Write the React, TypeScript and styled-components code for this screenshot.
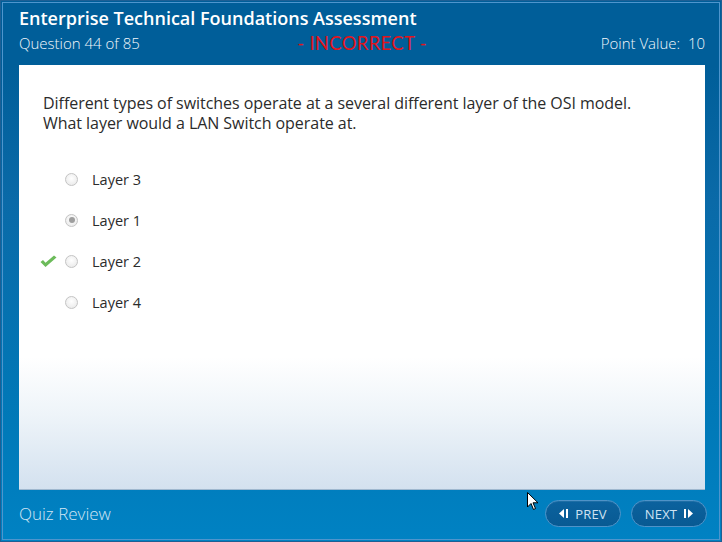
import React from "react";
import styled, { createGlobalStyle } from "styled-components";

const Global = createGlobalStyle`
  html, body { margin: 0; padding: 0; background: #0070b0; }
  body { width: 722px; height: 542px; overflow: hidden; }
  * { box-sizing: border-box; }
`;

const Frame = styled.div`
  position: relative;
  width: 722px;
  height: 542px;
  background: linear-gradient(#005e99 0px, #005e99 65px, #0a6aa8 200px, #0079b8 420px, #0082c3 542px);
  border: 1px solid #1d5f94;
  display: flex;
  flex-direction: column;
  &::after {
    content: "";
    position: absolute;
    inset: 1px;
    border: 1px solid #4e95cd;
    pointer-events: none;
  }
`;

const Header = styled.header`
  height: 64px;
  padding: 5px 16px 0 18px;
  display: flex;
  flex-direction: column;
  font-family: "Open Sans", "Lato", sans-serif;
  color: #fff;
`;

const Title = styled.h1`
  margin: 0;
  font-size: 18px;
  font-weight: 600;
  line-height: 24px;
  letter-spacing: 0px;
`;

const SubRow = styled.div`
  display: grid;
  grid-template-columns: 1fr auto 1fr;
  align-items: center;
  margin-top: 2px;
  font-size: 15px;
  font-weight: 300;
  line-height: 20px;
  color: #f2f7fb;
`;

const Status = styled.span`
  color: #e3141c;
  font-family: "Lato", "Open Sans", sans-serif;
  font-weight: 400;
  font-size: 18.5px;
  line-height: 20px;
  letter-spacing: 0.3px;
  margin-top: 1px;
`;

const Right = styled.span`
  justify-self: end;
`;

const Panel = styled.main`
  margin: 0 16px 0 18px;
  height: 425px;
  background: linear-gradient(#ffffff 0px, #ffffff 292px, #eef4f9 350px, #d3e1ef 425px);
  border-bottom: 1px solid #9fb8cf;
  padding: 28px 24px 0 24px;
  font-family: "Open Sans", "Noto Sans", sans-serif;
  color: #2b2b2b;
`;

const Question = styled.p`
  margin: 0;
  font-size: 16px;
  line-height: 20px;
  letter-spacing: -0.05px;
`;

const Options = styled.ul`
  list-style: none;
  margin: 36px 0 0 0;
  padding: 0;
  display: flex;
  flex-direction: column;
  gap: 21px;
`;

const Option = styled.li`
  position: relative;
  display: flex;
  align-items: center;
  height: 20px;
  padding-left: 22px;
  font-size: 14.5px;
`;

const Radio = styled.span<{ $checked?: boolean }>`
  width: 13px;
  height: 13px;
  border-radius: 50%;
  border: 1px solid #c4c4c4;
  background: radial-gradient(circle at 50% 40%, #ffffff, #e6e6e6);
  margin-right: 14px;
  display: flex;
  align-items: center;
  justify-content: center;
  &::after {
    content: "";
    width: 6px;
    height: 6px;
    border-radius: 50%;
    background: ${(p) => (p.$checked ? "#9e9e9e" : "transparent")};
  }
`;

const Check = styled.svg`
  position: absolute;
  left: -3px;
  top: 4px;
`;

const Footer = styled.footer`
  flex: 1;
  display: flex;
  align-items: center;
  justify-content: space-between;
  padding: 0 14px 4px 18px;
  font-family: "Open Sans", "Lato", sans-serif;
`;

const FooterLabel = styled.span`
  color: #d2e6f4;
  font-size: 17px;
  font-weight: 300;
`;

const Nav = styled.div`
  display: flex;
  gap: 10px;
`;

const NavButton = styled.button`
  width: 76px;
  height: 27px;
  border-radius: 14px;
  border: 1px solid #4f93c8;
  background: linear-gradient(#0b629e, #085a93);
  color: #cfe2f2;
  font-family: "Open Sans", "Lato", sans-serif;
  font-weight: 400;
  font-size: 13px;
  letter-spacing: 0.2px;
  display: flex;
  align-items: center;
  justify-content: center;
  gap: 6px;
  padding: 0;
  box-shadow: inset 0 1px 0 rgba(255, 255, 255, 0.08);
`;

const Cursor = styled.svg`
  position: absolute;
  left: 526px;
  top: 491px;
`;

const PrevIcon = () => (
  <svg width="10" height="9" viewBox="0 0 10 9">
    <path d="M5 0 L0 4.5 L5 9 Z" fill="#fff" />
    <rect x="7" y="0" width="2" height="9" fill="#fff" />
  </svg>
);

const NextIcon = () => (
  <svg width="10" height="9" viewBox="0 0 10 9">
    <rect x="1" y="0" width="2" height="9" fill="#fff" />
    <path d="M5 0 L10 4.5 L5 9 Z" fill="#fff" />
  </svg>
);

const options = [
  { label: "Layer 3" },
  { label: "Layer 1", checked: true },
  { label: "Layer 2", correct: true },
  { label: "Layer 4" },
];

export default function App() {
  return (
    <>
      <Global />
      <Frame>
        <Header>
          <Title>Enterprise Technical Foundations Assessment</Title>
          <SubRow>
            <span>Question 44 of 85</span>
            <Status>- INCORRECT -</Status>
            <Right>Point Value:&nbsp; 10</Right>
          </SubRow>
        </Header>
        <Panel>
          <Question>
            Different types of switches operate at a several different layer of the OSI model.
            <br />
            What layer would a LAN Switch operate at.
          </Question>
          <Options>
            {options.map((o) => (
              <Option key={o.label}>
                {o.correct && (
                  <Check width="17" height="13" viewBox="0 0 17 13">
                    <path d="M0.5 7 L5.5 12 L16.5 2.5 L14 0.5 L5.5 7.8 L3 5 Z" fill="#6cbb5a" />
                  </Check>
                )}
                <Radio $checked={o.checked} />
                {o.label}
              </Option>
            ))}
          </Options>
        </Panel>
        <Footer>
          <FooterLabel>Quiz Review</FooterLabel>
          <Nav>
            <NavButton>
              <PrevIcon />
              PREV
            </NavButton>
            <NavButton>
              NEXT
              <NextIcon />
            </NavButton>
          </Nav>
        </Footer>
        <Cursor width="12" height="19" viewBox="0 0 12 19">
          <path d="M0.5 0.5 L0.5 15 L4 11.5 L6.5 17.5 L8.5 16.5 L6 10.8 L11 10.8 Z" fill="#fff" stroke="#000" strokeWidth="1" />
        </Cursor>
      </Frame>
    </>
  );
}
